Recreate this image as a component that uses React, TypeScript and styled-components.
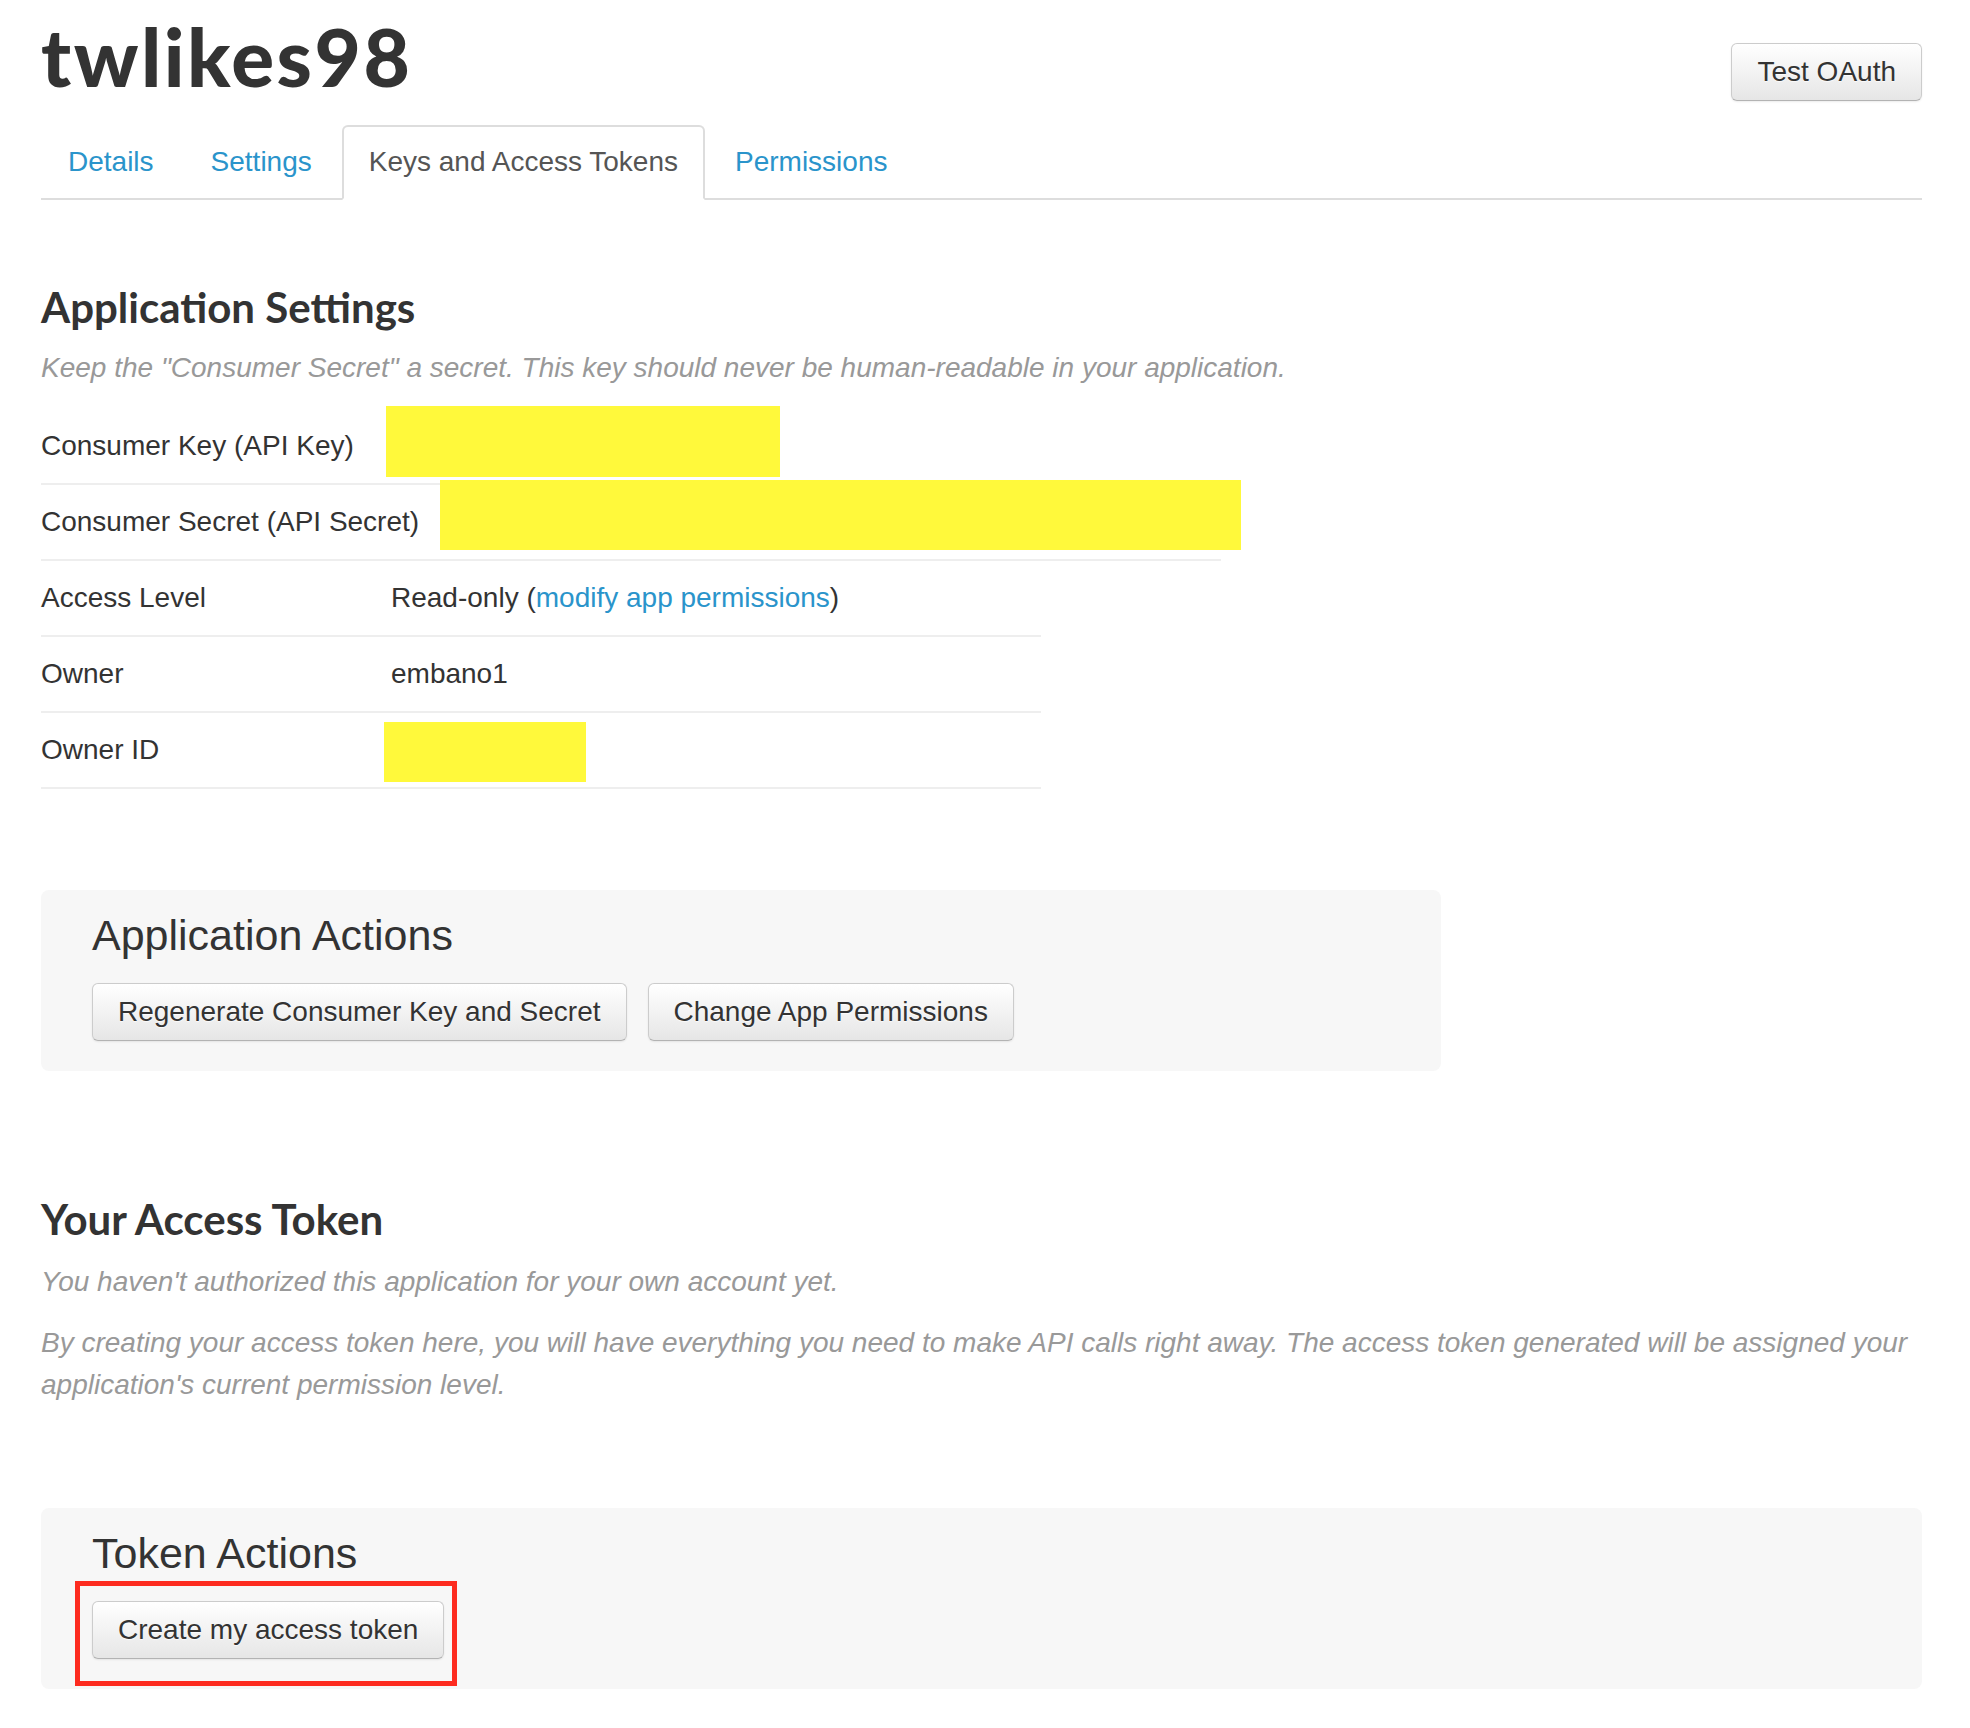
import React from "react";
import styled, { createGlobalStyle, css } from "styled-components";

const GlobalStyle = createGlobalStyle`
  html, body {
    margin: 0;
    padding: 0;
    background: #ffffff;
  }
  body {
    font-family: "Liberation Sans", Arial, Helvetica, sans-serif;
    color: #333333;
  }
`;

const Page = styled.div`
  width: 1881px;
  padding: 16px 0 40px 41px;
`;

const Header = styled.header`
  display: flex;
  justify-content: space-between;
  align-items: flex-start;
`;

const Title = styled.h1`
  margin: 0;
  font-family: Lato, "Open Sans", sans-serif;
  font-weight: 900;
  font-size: 80px;
  line-height: 80px;
  letter-spacing: 2.5px;
  color: #333333;
`;

const Button = styled.button`
  font-family: "Liberation Sans", Arial, sans-serif;
  font-size: 28px;
  line-height: 42px;
  padding: 7px 25px;
  color: #333333;
  background: linear-gradient(#ffffff, #e6e6e6);
  border: 1px solid #cccccc;
  border-bottom-color: #b3b3b3;
  border-radius: 6px;
  text-shadow: 0 1px 1px rgba(255, 255, 255, 0.75);
  box-shadow: inset 0 1px 0 rgba(255, 255, 255, 0.2), 0 1px 2px rgba(0, 0, 0, 0.08);
  cursor: pointer;
  white-space: nowrap;
`;

const HeaderButton = styled(Button)`
  margin-top: 27px;
`;

const Tabs = styled.ul`
  list-style: none;
  margin: 24px 0 0;
  padding: 0;
  display: flex;
  border-bottom: 2px solid #dddddd;
`;

const TabItem = styled.li`
  margin: 0 3px -2px 0;
`;

const TabLink = styled.a<{ $active?: boolean }>`
  display: block;
  padding: 14px 25px 15px;
  font-size: 28px;
  line-height: 42px;
  color: #2a94cb;
  text-decoration: none;
  border: 2px solid transparent;
  border-radius: 6px 6px 0 0;
  ${(p) =>
    p.$active &&
    css`
      color: #555555;
      background: #ffffff;
      border-color: #dddddd #dddddd transparent;
    `}
`;

const SectionHeading = styled.h2<{ $gap: number }>`
  margin: ${(p) => p.$gap}px 0 0;
  font-family: Lato, "Open Sans", sans-serif;
  font-weight: 700;
  font-size: 42px;
  line-height: 46px;
  color: #333333;
`;

const Hint = styled.p<{ $gap: number }>`
  margin: ${(p) => p.$gap}px 0 0;
  font-style: italic;
  font-size: 28px;
  line-height: 42px;
  color: #999999;
`;

const DetailsList = styled.div`
  margin-top: 20px;
`;

const Row = styled.div<{ $width: number }>`
  position: relative;
  display: grid;
  grid-template-columns: 350px 1fr;
  width: ${(p) => p.$width}px;
  padding: 16px 0;
  font-size: 28px;
  line-height: 42px;
  color: #333333;
  border-bottom: 2px solid #eeeeee;
`;

const Label = styled.span`
  white-space: nowrap;
`;

const Value = styled.span`
  white-space: nowrap;
`;

const Link = styled.a`
  color: #2a94cb;
  text-decoration: none;
`;

const Redaction = styled.span<{ $left: number; $top: number; $w: number; $h: number }>`
  position: absolute;
  left: ${(p) => p.$left}px;
  top: ${(p) => p.$top}px;
  width: ${(p) => p.$w}px;
  height: ${(p) => p.$h}px;
  background: #fff93b;
`;

const Panel = styled.section<{ $width: number; $gap: number }>`
  box-sizing: border-box;
  width: ${(p) => p.$width}px;
  margin-top: ${(p) => p.$gap}px;
  padding: 22px 51px 30px;
  background: #f7f7f7;
  border-radius: 8px;
`;

const PanelTitle = styled.h3`
  margin: 0 0 24px;
  font-family: "Liberation Sans", Arial, sans-serif;
  font-weight: 400;
  font-size: 43px;
  line-height: 47px;
  color: #333333;
`;

const ButtonRow = styled.div`
  display: flex;
  gap: 21px;
`;

const Highlight = styled.div`
  position: relative;
  display: inline-block;
  &::after {
    content: "";
    position: absolute;
    top: -20px;
    left: -17px;
    right: -13px;
    bottom: -27px;
    border: 5px solid #fd2b1f;
    pointer-events: none;
  }
`;

export default function App() {
  return (
    <>
      <GlobalStyle />
      <Page>
        <Header>
          <Title>twlikes98</Title>
          <HeaderButton>Test OAuth</HeaderButton>
        </Header>

        <Tabs>
          <TabItem>
            <TabLink href="#">Details</TabLink>
          </TabItem>
          <TabItem>
            <TabLink href="#">Settings</TabLink>
          </TabItem>
          <TabItem>
            <TabLink href="#" $active>
              Keys and Access Tokens
            </TabLink>
          </TabItem>
          <TabItem>
            <TabLink href="#">Permissions</TabLink>
          </TabItem>
        </Tabs>

        <SectionHeading $gap={84}>Application Settings</SectionHeading>
        <Hint $gap={17}>
          Keep the "Consumer Secret" a secret. This key should never be human-readable in your application.
        </Hint>

        <DetailsList>
          <Row $width={1180}>
            <Label>Consumer Key (API Key)</Label>
            <Value />
            <Redaction $left={345} $top={-3} $w={394} $h={71} />
          </Row>
          <Row $width={1180}>
            <Label>Consumer Secret (API Secret)</Label>
            <Value />
            <Redaction $left={399} $top={-5} $w={801} $h={70} />
          </Row>
          <Row $width={1000}>
            <Label>Access Level</Label>
            <Value>
              Read-only (<Link href="#">modify app permissions</Link>)
            </Value>
          </Row>
          <Row $width={1000}>
            <Label>Owner</Label>
            <Value>embano1</Value>
          </Row>
          <Row $width={1000}>
            <Label>Owner ID</Label>
            <Value />
            <Redaction $left={343} $top={9} $w={202} $h={60} />
          </Row>
        </DetailsList>

        <Panel $width={1400} $gap={101}>
          <PanelTitle>Application Actions</PanelTitle>
          <ButtonRow>
            <Button>Regenerate Consumer Key and Secret</Button>
            <Button>Change App Permissions</Button>
          </ButtonRow>
        </Panel>

        <SectionHeading $gap={125}>Your Access Token</SectionHeading>
        <Hint $gap={19}>You haven't authorized this application for your own account yet.</Hint>
        <Hint $gap={19}>
          By creating your access token here, you will have everything you need to make API calls right away. The
          access token generated will be assigned your application's current permission level.
        </Hint>

        <Panel $width={1881} $gap={102}>
          <PanelTitle>Token Actions</PanelTitle>
          <ButtonRow>
            <Highlight>
              <Button>Create my access token</Button>
            </Highlight>
          </ButtonRow>
        </Panel>
      </Page>
    </>
  );
}
